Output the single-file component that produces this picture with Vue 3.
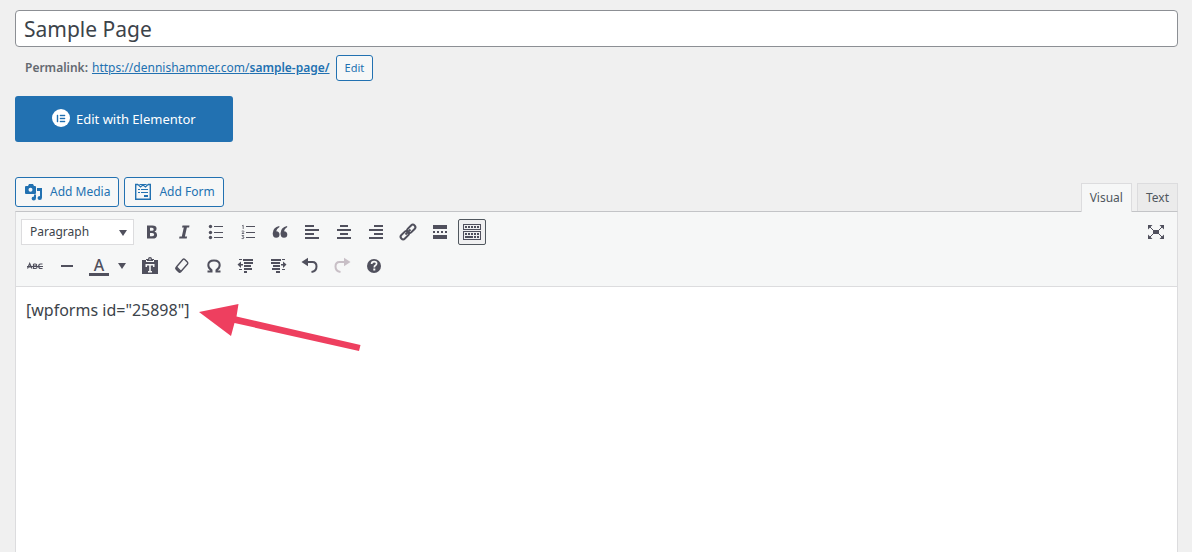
<script setup>
import { ref } from 'vue'

const title = ref('Sample Page')
const content = ref('[wpforms id="25898"]')
const format = ref('Paragraph')

const rowOne = [
  { name: 'Bold', svg: '<path fill-rule="evenodd" d="M5 3.500h5.400q4.200 0 4.200 3.300 0 2.200-2.100 2.800 2.600.6 2.600 3.300 0 3.600-4.700 3.600H5zM8 5.700v3h2q1.700 0 1.700-1.500T10 5.700zM8 10.900v3.400h2.200q2 0 2-1.700t-2-1.700z"/>' },
  { name: 'Italic', svg: '<path d="M8.500 3.500h7l-.4 2h-2.200l-2 9h2.200l-.4 2h-7.600l.4-2h2.300l2-9H8z"/>' },
  { name: 'Bulleted list', svg: '<circle cx="4.500" cy="4.500" r="1.700"/><circle cx="4.500" cy="10.500" r="1.700"/><circle cx="4.500" cy="15.500" r="1.700"/><path d="M8 4h9v1H8zM8 10h9v1H8zM8 15h9v1H8z"/>' },
  { name: 'Numbered list', svg: '<path d="M8 4h9v1H8zM8 10h9v1H8zM8 15h9v1H8z"/><path d="M4 4l1.200-.8V7M3.700 9.200q2.400-.8 2.200.4-.1.700-2 1.900h2.300M3.700 13.500h2L4.700 15q1.600 0 1.300 1-.4 1-2.400.5" fill="none" stroke="currentColor" stroke-width=".8"/>' },
  { name: 'Blockquote', svg: '<path d="M9.200 4q-6.200 1.200-6.500 7.200 0 4.600 3.500 4.600 3.300 0 3.300-3.300 0-3-3.300-3.200Q6.500 6.700 9.500 5zM17 4q-6.200 1.200-6.500 7.200 0 4.600 3.500 4.600 3.300 0 3.300-3.300 0-3-3.300-3.200.3-2.600 3.300-4.300z"/>' },
  { name: 'Align left', svg: '<path d="M3 3h9v2H3zM3 7h14v2H3zM3 11h9v2H3zM3 15h14v2H3z"/>' },
  { name: 'Align center', svg: '<path d="M6 3h8v2H6zM3 7h14v2H3zM6 11h8v2H6zM3 15h14v2H3z"/>' },
  { name: 'Align right', svg: '<path d="M8 3h9v2H8zM3 7h14v2H3zM8 11h9v2H8zM3 15h14v2H3z"/>' },
  { name: 'Insert link', svg: '<g fill="none" stroke="currentColor" stroke-width="2"><rect x="8.500" y="4.300" width="9.500" height="5" rx="2.500" transform="rotate(-45 13.250 6.800)"/><rect x="2" y="10.700" width="9.500" height="5" rx="2.500" transform="rotate(-45 6.750 13.200)"/><path d="M7.500 12.500l5-5"/></g>' },
  { name: 'Read more', svg: '<path d="M3 3h14v4H3zM3 9h2v2H3zM7 9h2v2H7zM11 9h2v2h-2zM15 9h2v2h-2zM3 13h14v4H3z"/>' },
  { name: 'Toolbar toggle', active: true, svg: '<path fill-rule="evenodd" d="M1 2h18v6H1zM2 3v4h16V3zM1 9h18v9H1zM2 10v7h16v-7z"/><path d="M3 4h2v2H3zM6 4h2v2H6zM9 4h2v2H9zM12 4h2v2h-2zM15 4h2v2h-2zM3 11h2v2H3zM6 11h2v2H6zM9 11h2v2H9zM12 11h2v2h-2zM15 11h2v2h-2zM3 14h8v2H3zM12 14h2v2h-2zM15 14h2v2h-2z"/>' },
]

const rowTwoStart = [
  { name: 'Strikethrough', svg: '<path d="M2.500 12.500L4.700 7.500l2.200 5M3.300 11h2.900M8.500 8v4.500h2q1.500 0 1.500-1.200T10.500 10h-2M8.500 8h1.800q1.400 0 1.400 1T10.300 10M17.500 8h-2q-1.800 0-1.800 2.200t1.800 2.300h2M2 10.500h16" fill="none" stroke="currentColor" stroke-width="1.200"/>' },
  { name: 'Horizontal line', svg: '<path d="M4 9h12v2H4z"/>' },
]

const rowTwoEnd = [
  { name: 'Paste as text', svg: '<path fill-rule="evenodd" d="M2 4h4V3h2q0-2 2-2t2 2h2v1h4v14H2zM6 4v2h8V4h-1v1H7V4zM9.300 2.500v1.200h1.400V2.500zM5.500 8v3H7V9.500h2.200V15H8v1.500h4V15h-1.200V9.500H13V11h1.500V8z"/>' },
  { name: 'Clear formatting', svg: '<path d="M10.800 3.500q1-1 2 0l2.500 2.500q1 1 .2 2l-6.800 7.700q-1 .9-2 0l-2.500-2.500q-.9-1 0-2z" fill="none" stroke="currentColor" stroke-width="1.400"/><path d="M4.200 11.200l4.500 4.500q-1.200 1-2 0l-2.500-2.500q-.8-1 0-2z"/><path d="M4.500 11l4.300 4.300" stroke="currentColor" stroke-width="1.500"/>' },
  { name: 'Special character', svg: '<path d="M3.500 15.500h4v-1.300Q4.300 12.300 4.300 9q0-4.600 5.700-4.600T15.700 9q0 3.300-3.200 5.200v1.300h4" fill="none" stroke="currentColor" stroke-width="2"/>' },
  { name: 'Decrease indent', svg: '<path d="M3 3h3v1H3zM7 3h10v2H7zM8 6h9v2H8zM8 9h7v2H8zM8 12h8v2H8zM3 13h3v1H3zM8 15h3v2H8zM1.500 8.500L5 5.500V8h2v1.500H5v2.500z"/>' },
  { name: 'Increase indent', svg: '<path d="M3 3h10v2H3zM14 3h3v1h-3zM3 6h9v2H3zM5 9h7v2H5zM4 12h8v2H4zM14 13h3v1h-3zM8 15h4v2H8zM18.500 8.500L15 5.500V8h-2v1.500h2v2.500z"/>' },
  { name: 'Undo', svg: '<path d="M6 6h6.500q4 0 4 4.500 0 4.800-5 5.500" fill="none" stroke="currentColor" stroke-width="2"/><path d="M1.500 6L8 1.800v8.400z"/>' },
  { name: 'Redo', disabled: true, svg: '<path d="M14 6H7.500q-4 0-4 4.500 0 4.800 5 5.500" fill="none" stroke="currentColor" stroke-width="2"/><path d="M18.500 6L12 1.800v8.400z"/>' },
  { name: 'Keyboard shortcuts', svg: '<circle cx="10" cy="10" r="7"/><path d="M7.600 8q0-2.400 2.500-2.400 2.500 0 2.500 2 0 1.200-1.300 1.900-1 .6-1 1.900" fill="none" stroke="#f6f7f7" stroke-width="1.700"/><path d="M9.300 12.500h2v2h-2z" fill="#f6f7f7"/>' },
]
</script>

<template>
  <main class="page">
    <input v-model="title" class="title" type="text" aria-label="Page title">

    <div class="permalink">
      <strong>Permalink:</strong>
      <a href="#">https://dennishammer.com/<b>sample-page/</b></a>
      <button type="button" class="small-button">Edit</button>
    </div>

    <button type="button" class="elementor">
      <svg width="18" height="20" viewBox="0 0 18 20" aria-hidden="true">
        <circle cx="9" cy="9" r="9" fill="#fff" />
        <path d="M5 6h1v7H5zM8 6h5v1H8zM8 9h5v1H8zM8 12h5v1H8z" fill="#2271b1" stroke="#2271b1" stroke-width=".4" />
      </svg>
      Edit with Elementor
    </button>

    <div class="tools">
      <div class="media-buttons">
        <button type="button" class="media-button">
          <svg width="20" height="20" viewBox="0 0 20 20" aria-hidden="true">
            <path fill="currentColor" fill-rule="evenodd" d="M2 4h2l1-2h4l1 2h1q1 0 1 1v6q0 1-1 1H2q-1 0-1-1V5q0-1 1-1zM6.500 5.800a2 2 0 1 0 0 4 2 2 0 0 0 0-4z" />
            <path fill="currentColor" d="M13 6h5v9.500q0 2.500-2.300 2.500-2.200 0-2.200-2.100 0-1.900 2.500-2V9h-3zM10 12.500H12v3.500q0 2.500-2.200 2.500-2.200 0-2.200-2 0-1.800 2.400-2z" />
          </svg>
          Add Media
        </button>
        <button type="button" class="media-button">
          <svg width="20" height="20" viewBox="0 0 20 20" aria-hidden="true">
            <path d="M5 2.500H2.700v14.800h14.600V2.500H15" fill="none" stroke="currentColor" stroke-width="1.400" />
            <path d="M5 2.500l2.500 2.500L10 3l2.500 2L15 2.500M6.500 2.500h7" fill="none" stroke="currentColor" stroke-width="1.200" />
            <path fill="currentColor" d="M5 7h2v1H5zM8 7h7v1H8zM5 10h2v1H5zM8 10h7v1H8zM11 13h4v2h-4z" />
          </svg>
          Add Form
        </button>
      </div>
      <div class="tabs">
        <button type="button" class="tab active">Visual</button>
        <button type="button" class="tab">Text</button>
      </div>
    </div>

    <section class="editor">
      <div class="toolbar">
        <div class="row">
          <div class="format">
            <select v-model="format" aria-label="Text format">
              <option>Paragraph</option>
              <option>Heading 1</option>
              <option>Heading 2</option>
            </select>
            <span class="caret"></span>
          </div>
          <button v-for="b in rowOne" :key="b.name" type="button" class="tool" :class="{ pressed: b.active }" :aria-label="b.name">
            <svg width="20" height="20" viewBox="0 0 20 20" fill="currentColor" v-html="b.svg"></svg>
          </button>
          <button type="button" class="tool expand" aria-label="Distraction-free writing">
            <svg width="20" height="20" viewBox="0 0 20 20" fill="currentColor">
              <path d="M7 8h6v4H7zM2 3h4.500L2 7.500zM18 3h-4.500L18 7.500zM2 17h4.500L2 12.500zM18 17h-4.500l4.500-4.500z" />
              <path d="M4 5l4 4M16 5l-4 4M4 15l4-4M16 15l-4-4" stroke="currentColor" />
            </svg>
          </button>
        </div>
        <div class="row">
          <button v-for="b in rowTwoStart" :key="b.name" type="button" class="tool" :aria-label="b.name">
            <svg width="20" height="20" viewBox="0 0 20 20" fill="currentColor" v-html="b.svg"></svg>
          </button>
          <button type="button" class="tool color" aria-label="Text color">
            <span class="letter">A</span>
            <span class="caret"></span>
          </button>
          <button v-for="b in rowTwoEnd" :key="b.name" type="button" class="tool" :disabled="b.disabled" :aria-label="b.name">
            <svg width="20" height="20" viewBox="0 0 20 20" fill="currentColor" v-html="b.svg"></svg>
          </button>
        </div>
      </div>
      <div class="content">
        <textarea v-model="content" aria-label="Page content" spellcheck="false"></textarea>
        <svg class="arrow" width="164" height="50" viewBox="0 0 164 50" aria-hidden="true">
          <path d="M1 9L40.500 1l-2 12.500L162.500 42l-1.500 6L36.500 20l-3.500 13z" fill="#ee3f5f" />
        </svg>
      </div>
    </section>
  </main>
</template>

<style>
body {
  background: #f0f0f0;
}
</style>

<style scoped>
.page,
.page * {
  box-sizing: border-box;
}
.page {
  display: flex;
  flex-direction: column;
  align-items: flex-start;
  min-height: 100vh;
  padding: 10px 14px 0 15px;
  font-family: "Noto Sans", "Open Sans", sans-serif;
  font-size: 12px;
  line-height: 18px;
  color: #3c434a;
}
button,
input,
select,
textarea {
  margin: 0;
  font: inherit;
  color: inherit;
}
.title {
  width: 100%;
  height: 37px;
  padding: 0 8px;
  border: 1px solid #8c8f94;
  border-radius: 4px;
  background: #fff;
  font-size: 21px;
  line-height: 30px;
}
.permalink {
  display: flex;
  align-items: center;
  gap: 4px;
  height: 26px;
  margin: 8px 10px 15px;
}
.permalink strong,
.permalink b {
  font-weight: 600;
}
.permalink strong {
  color: #646970;
}
.permalink a {
  color: #2271b1;
}
.small-button {
  height: 26px;
  margin-left: 2px;
  padding: 0 8px;
  border: 1px solid #2271b1;
  border-radius: 3px;
  background: #f6f7f7;
  color: #2271b1;
  font-size: 11px;
}
.elementor {
  display: flex;
  align-items: center;
  gap: 6px;
  height: 46px;
  padding: 0 37px;
  border: 0;
  border-radius: 3px;
  background: #2271b1;
  color: #fff;
  font-size: 13px;
}
.tools {
  display: flex;
  justify-content: space-between;
  align-items: flex-end;
  width: 100%;
  margin-top: 35px;
}
.media-buttons {
  display: flex;
  gap: 5px;
  margin-bottom: 4px;
}
.media-button {
  display: flex;
  align-items: center;
  gap: 6px;
  height: 30px;
  padding: 0 8px;
  border: 1px solid #2271b1;
  border-radius: 3px;
  background: #f6f7f7;
  color: #2271b1;
  line-height: 20px;
}
.tabs {
  display: flex;
  gap: 5px;
}
.tab {
  height: 28px;
  padding: 0 8px;
  border: 1px solid #dcdcde;
  border-bottom: 0;
  background: #ebebeb;
  color: #50575e;
}
.tab.active {
  z-index: 1;
  height: 29px;
  margin-bottom: -1px;
  background: #f6f7f7;
}
.editor {
  display: flex;
  flex: 1;
  flex-direction: column;
  width: 100%;
  border: 1px solid #dcdcde;
  border-top-color: #c3c4c7;
  border-bottom: 0;
  background: #fff;
}
.toolbar {
  display: flex;
  flex-direction: column;
  gap: 8px;
  padding: 7px 5px;
  border-bottom: 1px solid #dcdcde;
  background: #f6f7f7;
}
.row {
  display: flex;
  gap: 4px;
  height: 26px;
}
.format {
  position: relative;
  width: 113px;
}
.format select {
  width: 100%;
  height: 26px;
  padding: 0 8px;
  border: 1px solid #dcdcde;
  border-radius: 0;
  background: #fff;
  appearance: none;
}
.caret {
  width: 0;
  border: 4px solid transparent;
  border-top: 6px solid #50505d;
  border-bottom: 0;
}
.format .caret {
  position: absolute;
  top: 11px;
  right: 7px;
  pointer-events: none;
}
.tool {
  display: flex;
  align-items: center;
  justify-content: center;
  width: 28px;
  height: 26px;
  padding: 0;
  border: 1px solid transparent;
  border-radius: 2px;
  background: transparent;
  color: #50505d;
}
.tool.pressed {
  border-color: #50575e;
  background: #f0f0f1;
}
.tool:disabled {
  color: #c8bfc6;
}
.expand {
  margin-left: auto;
  margin-right: 2px;
}
.color {
  justify-content: flex-start;
  gap: 9px;
  width: 47px;
  padding-left: 3px;
}
.letter {
  width: 20px;
  height: 19px;
  border-bottom: 3px solid #50505d;
  font-size: 16px;
  line-height: 16px;
  font-weight: 500;
}
.content {
  position: relative;
  display: flex;
  flex: 1;
}
textarea {
  flex: 1;
  min-height: 240px;
  padding: 11px 10px;
  border: 0;
  background: transparent;
  outline: 0;
  resize: none;
  font-size: 16px;
  line-height: 24px;
}
.arrow {
  position: absolute;
  top: 16px;
  left: 182px;
}
</style>
